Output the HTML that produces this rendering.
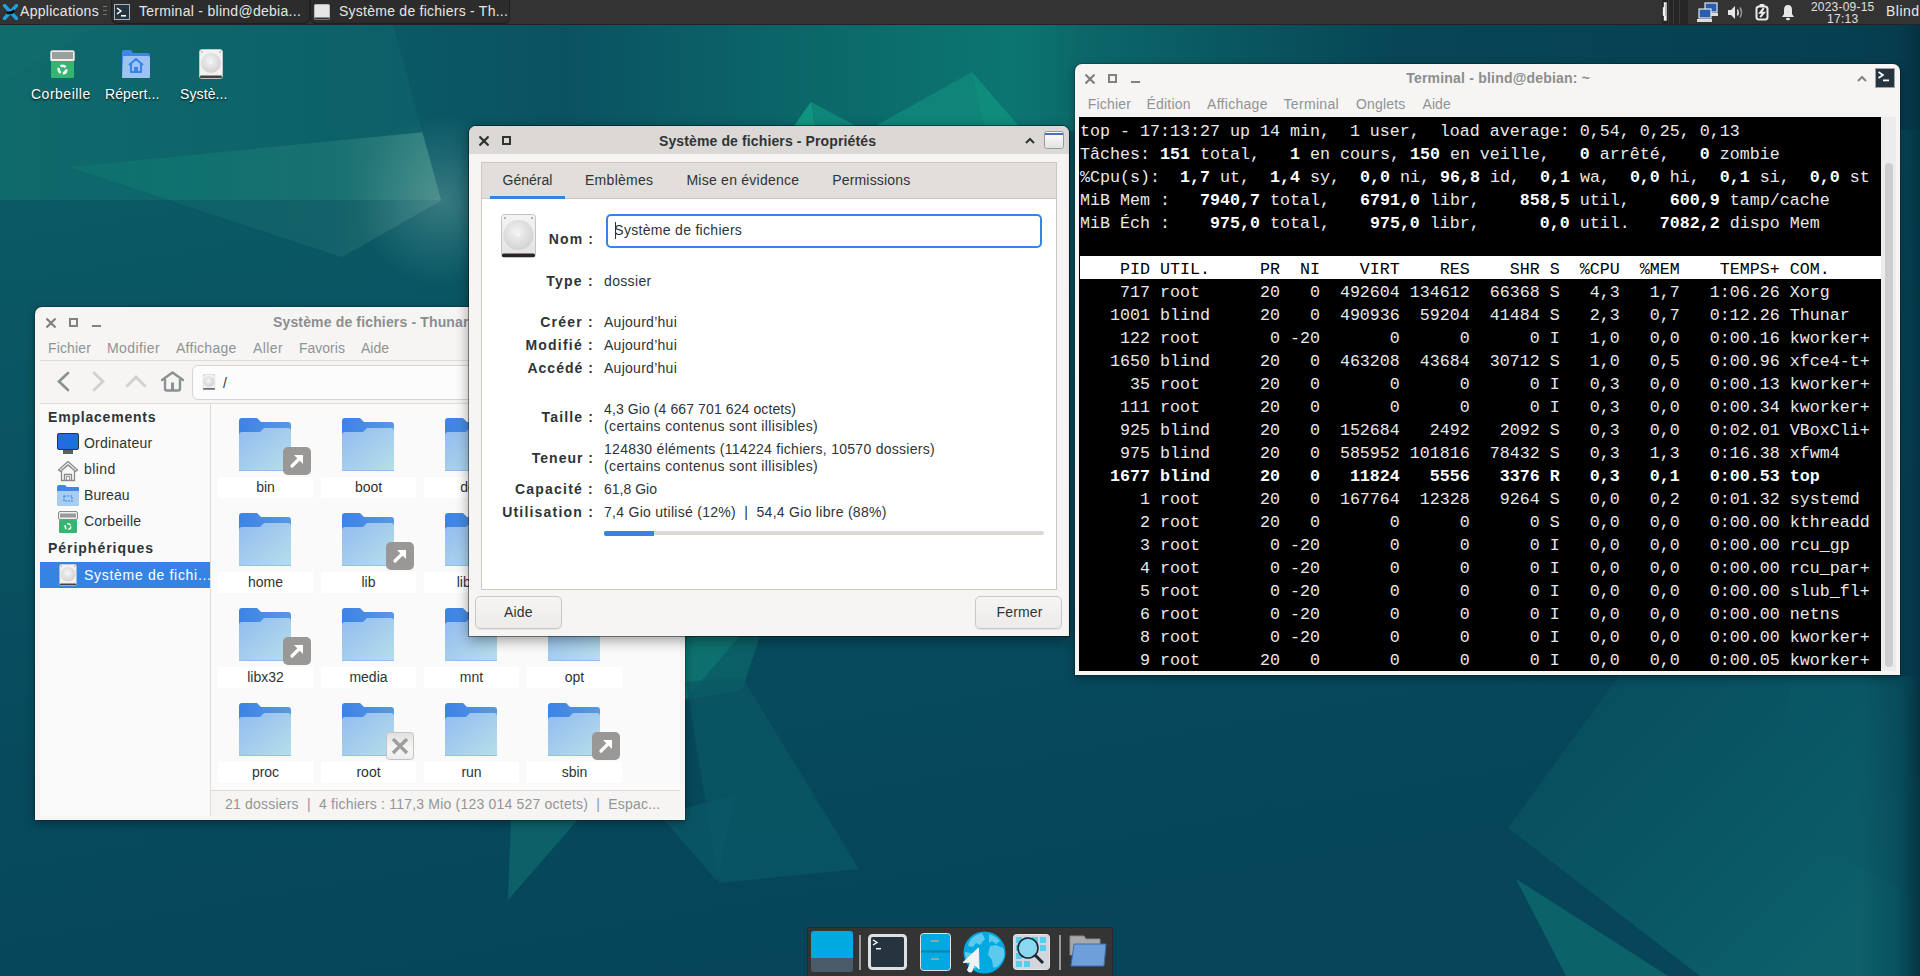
<!DOCTYPE html>
<html><head><meta charset="utf-8">
<style>
*{margin:0;padding:0;box-sizing:border-box}
html,body{width:1920px;height:976px;overflow:hidden}
body{position:relative;font-family:"Liberation Sans",sans-serif;font-size:14px;color:#2e3436;background:#0b4a5c}
.a{position:absolute}
.t{position:absolute;white-space:nowrap;line-height:1}
#wall{position:absolute;left:0;top:0;width:1920px;height:976px}
#panel{position:absolute;left:0;top:0;width:1920px;height:25px;background:#333333;border-bottom:1px solid #232323}
.pt{color:#e6e6e6;font-size:14px}
.task{position:absolute;top:0;height:24px;background:#2c2c2c;border:1px solid #1f1f1f;border-top:none;border-radius:0 0 6px 6px}
.dico{color:#fff;font-size:14px;text-shadow:0 1px 2px #000}

.win{position:absolute;background:#f6f5f4;border-radius:7px 7px 0 0;box-shadow:0 0 0 1px rgba(0,0,0,0.18),0 3px 10px rgba(0,0,0,0.35)}
.ui{font-size:14px;color:#2e3436}
.mi{font-size:14px;color:#8f9394}
.fl{position:absolute;width:95px;height:21px;background:#fff}
.fn{position:absolute;width:95px;text-align:center;font-size:14px;color:#2e3436;line-height:1}

.lb{position:absolute;right:475px;white-space:nowrap;line-height:1;font-size:14px;font-weight:bold;color:#2e3436}
.vl{position:absolute;left:135px;white-space:nowrap;line-height:1;font-size:14px;color:#2e3436}
.btn{position:absolute;width:87px;height:33px;border:1px solid #cdc7c2;border-radius:5px;background:linear-gradient(#f6f5f4,#edebe9);box-shadow:0 1px 1px rgba(0,0,0,0.07)}

.tr{position:absolute;left:1px;height:23px;width:801px;font-family:"Liberation Mono",monospace;font-size:16.667px;line-height:23px;color:#e8e8e8;white-space:pre;padding-top:2px}
.tr b{color:#fff}
</style></head><body>
<svg id="wall" width="1920" height="976" viewBox="0 0 1920 976">
<defs>
<linearGradient id="bg" x1="0" y1="0" x2="0.35" y2="1">
<stop offset="0" stop-color="#0c5f67"/>
<stop offset="0.35" stop-color="#0a5563"/>
<stop offset="0.7" stop-color="#074a5e"/>
<stop offset="1" stop-color="#06455a"/>
</linearGradient>
<linearGradient id="topmid" gradientUnits="userSpaceOnUse" x1="393" y1="0" x2="1075" y2="0">
<stop offset="0" stop-color="#0b5966"/>
<stop offset="0.25" stop-color="#0a5262"/>
<stop offset="0.6" stop-color="#0b6769"/>
<stop offset="0.9" stop-color="#0c7571"/>
<stop offset="1" stop-color="#0c6f6f"/>
</linearGradient>
<linearGradient id="topright" gradientUnits="userSpaceOnUse" x1="1040" y1="0" x2="1920" y2="0">
<stop offset="0" stop-color="#0c706f"/>
<stop offset="0.05" stop-color="#0b6769"/>
<stop offset="0.4" stop-color="#074656"/>
<stop offset="1" stop-color="#063e50"/>
</linearGradient>
<linearGradient id="rstrip" x1="0" y1="0" x2="1" y2="0">
<stop offset="0" stop-color="#05384a" stop-opacity="0"/>
<stop offset="0.6" stop-color="#05384a" stop-opacity="0.35"/>
<stop offset="1" stop-color="#042f40" stop-opacity="0.9"/>
</linearGradient>
<linearGradient id="leftg" x1="0" y1="0" x2="0" y2="1">
<stop offset="0" stop-color="#0b5d66"/>
<stop offset="0.5" stop-color="#09525f"/>
<stop offset="1" stop-color="#07485c"/>
</linearGradient>
<radialGradient id="glow" cx="0.5" cy="0.5" r="0.5"><stop offset="0" stop-color="#6a9c9c" stop-opacity="0.5"/><stop offset="1" stop-color="#4a9a96" stop-opacity="0"/></radialGradient>
</defs>
<rect width="1920" height="976" fill="url(#bg)"/>
<linearGradient id="tl" gradientUnits="userSpaceOnUse" x1="0" y1="0" x2="441" y2="0"><stop offset="0" stop-color="#0f6a6c"/><stop offset="1" stop-color="#0c5f68"/></linearGradient>
<linearGradient id="wedge" gradientUnits="userSpaceOnUse" x1="70" y1="0" x2="441" y2="0"><stop offset="0" stop-color="#0f7a72" stop-opacity="0.5"/><stop offset="0.3" stop-color="#0f7771" stop-opacity="0.7"/><stop offset="0.7" stop-color="#217a76" stop-opacity="0.6"/><stop offset="1" stop-color="#3d8984" stop-opacity="0.9"/></linearGradient>
<polygon points="0,25 393,25 441,200 0,200" fill="url(#tl)"/>
<polygon points="70,167 425,132 442,200 342,257" fill="url(#wedge)"/>
<polygon points="171,200 442,200 342,257" fill="#094a5c" opacity="0.3"/>
<polygon points="0,25 99,25 0,83" fill="#117070" opacity="0.35"/>
<polygon points="393,25 1075,25 1075,130 441,200" fill="url(#topmid)"/>
<circle cx="441" cy="200" r="85" fill="url(#glow)"/>
<polygon points="791,130 811,102 864,130" fill="#0e8779"/>
<polygon points="791,130 811,102 815,130" fill="#12a086" opacity="0.6"/>
<polygon points="868,130 972,72 1022,130" fill="#0e8578"/>
<polygon points="972,72 985,130 1022,130" fill="#0f8f7e" opacity="0.7"/>
<rect x="1040" y="25" width="880" height="105" fill="url(#topright)"/>
<polygon points="685,636 760,636 742,690 685,700" fill="#0b6568" opacity="0.8"/>
<polygon points="685,636 740,636 685,700" fill="#0e726f" opacity="0.9"/>
<polygon points="686,682 742,677 859,869 719,883" fill="#0a5866" opacity="0.7"/>
<polygon points="511,815 582,815 508,900" fill="#0c6068"/>
<polygon points="660,815 735,795 717,881" fill="#0a5767" opacity="0.8"/>
<linearGradient id="brA" gradientUnits="userSpaceOnUse" x1="1500" y1="676" x2="1800" y2="976"><stop offset="0" stop-color="#074b5d"/><stop offset="0.5" stop-color="#095463"/><stop offset="1" stop-color="#0b606a"/></linearGradient>
<polygon points="1508,828 1619,676 1920,676 1920,976 1700,976" fill="url(#brA)"/>
<polygon points="1516,879 1566,976 1668,976" fill="#0b6369"/>
<polygon points="1792,676 1920,676 1920,900 1766,815" fill="#0a5868" opacity="0.45"/>
<rect x="1860" y="25" width="60" height="951" fill="url(#rstrip)"/>
</svg>

<!-- top panel -->
<div id="panel">
<svg class="a" style="left:3px;top:4px" width="15" height="16" viewBox="0 0 15 16"><path d="M1.5 1.5 L13.5 14.5 M13.5 1.5 L1.5 14.5" stroke="#1aa3de" stroke-width="3.4" stroke-linecap="square"/><path d="M3.2 8.6 Q4.2 7.2 6.5 7.4 L9.5 6.6 L10.5 5.2 L11.2 6.4 L12.3 7.2 L11 8.2 Q10.4 10 7.5 10.2 L4.5 10.3 Z" fill="#0a0a0a"/></svg>
<div class="t pt" style="left:20px;top:4px;letter-spacing:0.29px">Applications</div>
<div class="a" style="left:103px;top:6px;width:4px;height:1px;background:#777;box-shadow:0 4px 0 #777,0 8px 0 #777"></div>
<div class="task" style="left:111px;width:199px">
<svg class="a" style="left:2px;top:4px" width="16" height="16" viewBox="0 0 16 16"><rect x="0.5" y="0.5" width="15" height="15" fill="#263440" stroke="#a9b4bd"/><path d="M3 4 L7 7 L3 10" stroke="#fff" stroke-width="1.5" fill="none"/><rect x="7" y="11" width="5" height="1.6" fill="#fff"/></svg>
<div class="t pt" style="left:27px;top:4px;letter-spacing:0.28px">Terminal - blind@debia...</div>
</div>
<div class="task" style="left:310px;width:200px">
<svg class="a" style="left:3px;top:4px" width="16" height="16" viewBox="0 0 16 16"><rect x="0.5" y="0.5" width="15" height="15" rx="1" fill="#e6e6e6" stroke="#bbb"/><rect x="0.5" y="13.5" width="15" height="2" fill="#333"/></svg>
<div class="t pt" style="left:28px;top:4px;letter-spacing:0.25px">Système de fichiers - Th...</div>
</div>
<div class="a" style="left:1662px;top:0;width:26px;height:24px;background:#262626"></div><div class="a" style="left:1668px;top:0;width:1px;height:24px;background:#3a3a3a"></div><div class="a" style="left:1673px;top:0;width:1px;height:24px;background:#3a3a3a"></div><div class="a" style="left:1679px;top:0;width:1px;height:24px;background:#3a3a3a"></div><svg class="a" style="left:1661px;top:1px" width="8" height="21" viewBox="0 0 8 21"><path d="M2.5 1 H6 V20 H2.5 V15 H1.5 V6 H2.5 Z" fill="#f2f2f2" stroke="#222" stroke-width="0.6"/><rect x="4" y="3" width="1" height="12" fill="#bbb"/></svg>

<svg class="a" style="left:1697px;top:2px" width="24" height="21" viewBox="0 0 24 21"><rect x="8" y="1" width="12" height="9" fill="#2a5db0" stroke="#dfe6ec" stroke-width="1.2"/><rect x="11" y="11" width="10" height="3" fill="#ddd"/><rect x="2" y="7" width="12" height="9" fill="#2a5db0" stroke="#dfe6ec" stroke-width="1.2"/><rect x="0" y="17" width="15" height="3" fill="#ddd"/></svg>
<svg class="a" style="left:1727px;top:5px" width="18" height="15" viewBox="0 0 18 15"><path d="M1 5 H4 L8 1 V14 L4 10 H1 Z" fill="#e6e6e6"/><path d="M10.5 4.5 Q12 7.5 10.5 10.5" stroke="#e6e6e6" stroke-width="1.5" fill="none"/><path d="M13 2.5 Q16 7.5 13 12.5" stroke="#999" stroke-width="1.5" fill="none"/></svg>
<svg class="a" style="left:1755px;top:3px" width="14" height="18" viewBox="0 0 14 18"><rect x="1.5" y="3.5" width="11" height="13" rx="2.5" fill="#2a2a2a" stroke="#ececec" stroke-width="2"/><rect x="4.5" y="1" width="5" height="3" rx="1" fill="#ececec"/><path d="M8.8 5.2 L5.2 9.8 H8.8 L5.2 14.2" stroke="#ececec" stroke-width="2.1" fill="none" stroke-linejoin="miter"/></svg>
<svg class="a" style="left:1781px;top:4px" width="14" height="17" viewBox="0 0 14 17"><path d="M7 1 Q11 1 11 6 V10 L13 13 H1 L3 10 V6 Q3 1 7 1 Z" fill="#e6e6e6"/><ellipse cx="7" cy="15" rx="2" ry="1.2" fill="#e6e6e6"/></svg>
<div class="t" style="left:1811px;top:1px;font-size:12px;color:#e0e0e0;letter-spacing:0.2px">2023-09-15</div>
<div class="t" style="left:1827px;top:13px;font-size:12px;color:#e0e0e0;letter-spacing:0.3px">17:13</div>
<div class="t pt" style="left:1886px;top:4px;letter-spacing:0.5px">Blind</div>
</div>

<!-- desktop icons -->
<svg class="a" style="left:50px;top:50px" width="25" height="28" viewBox="0 0 25 28"><rect x="0.5" y="0.5" width="24" height="11" rx="2" fill="#f0f0f0" stroke="#bdbdbd"/><rect x="2" y="2" width="21" height="7" fill="#9e9e9e"/><rect x="1" y="11" width="23" height="17" rx="1.5" fill="#35b56f"/><circle cx="12.5" cy="19.5" r="3.8" fill="none" stroke="#fff" stroke-width="2.6" stroke-dasharray="5.5 2.2"/></svg>
<svg class="a" style="left:122px;top:50px" width="28" height="28" viewBox="0 0 28 28"><path d="M0 2 Q0 0 2 0 H9 L11 3 H26 Q28 3 28 5 V26 H0 Z" fill="#3f86e8"/><path d="M1 7 Q1 6 2 6 H26 Q28 6 28 8 V27 Q28 28 27 28 H0 Z" fill="#9cc3f3"/><path d="M7 15 L14 9 L21 15 M9 13.5 V22 H19 V13.5 M13 22 V18 H15 V22" stroke="#3a84e6" stroke-width="2" fill="none"/></svg>
<svg class="a" style="left:199px;top:49px" width="24" height="30" viewBox="0 0 24 30"><use href="#drive"/></svg>
<div class="t dico" style="left:31px;top:87px;letter-spacing:0.5px">Corbeille</div>
<div class="t dico" style="left:105px;top:87px;letter-spacing:0.09px">Répert...</div>
<div class="t dico" style="left:180px;top:87px;letter-spacing:0.1px">Systè...</div>

<!-- dock -->
<div class="a" style="left:807px;top:927px;width:306px;height:49px;background:#343434;border:1px solid #2a2a2a;border-bottom:none"></div>
<svg class="a" style="left:811px;top:931px" width="42" height="41" viewBox="0 0 42 41"><rect x="0" y="0" width="42" height="41" rx="3" fill="#4a5c6a"/><path d="M3 0 H39 Q42 0 42 3 V27 H0 V3 Q0 0 3 0 Z" fill="#00a9df"/></svg>
<div class="a" style="left:859px;top:935px;width:2px;height:35px;background:#9a9a9a"></div>
<svg class="a" style="left:868px;top:934px" width="39" height="36" viewBox="0 0 39 36"><rect x="1.5" y="1.5" width="36" height="33" rx="3" fill="#263440" stroke="#dde1e4" stroke-width="3"/><path d="M5 6 L9 8.5 L5 11" stroke="#fff" stroke-width="1.4" fill="none"/><rect x="8" y="14" width="5" height="1.4" fill="#fff"/></svg>
<svg class="a" style="left:920px;top:933px" width="31" height="38" viewBox="0 0 31 38"><rect x="0.5" y="0.5" width="30" height="37" rx="3" fill="#00a9df" stroke="#dfe3e6"/><rect x="1" y="17.5" width="29" height="2" fill="#0a82aa"/><rect x="11" y="7" width="8" height="2" fill="#8aa"/><rect x="11" y="25" width="8" height="2" fill="#8aa"/></svg>
<svg class="a" style="left:963px;top:931px" width="43" height="43" viewBox="0 0 43 43"><circle cx="21.5" cy="21.5" r="21" fill="#00a9df"/><path d="M9 7 Q14 3 19 2 L22 8 L17 14 L13 12 L10 16 L5 15 Q6 10 9 7 Z" fill="#5ccaed"/><path d="M26 3 Q33 5 37 10 L33 13 L29 10 L26 12 Z" fill="#5ccaed"/><path d="M27 15 L33 14 L40 17 Q42 21 41 27 L37 33 Q33 38 30 36 L29 29 L25 24 L26 19 Z" fill="#5ccaed"/><path d="M2 21 L8 22 L14 26 L16 33 L12 38 Q4 32 2 24 Z" fill="#5ccaed"/><path d="M15.5 17 L0 31.5 L8 31 L4.5 39 Q5 41.5 8.5 41 L11.5 33.5 L16 38 Z" fill="#f2f2f2" stroke="#f2f2f2" stroke-width="1" stroke-linejoin="round"/></svg>
<svg class="a" style="left:1013px;top:934px" width="37" height="36" viewBox="0 0 37 36"><rect x="0.5" y="0.5" width="36" height="35" rx="3" fill="#d4d7da" stroke="#e4e6e8"/><g fill="#5ccaed"><rect x="3" y="3" width="6" height="6"/><rect x="11" y="3" width="6" height="6"/><rect x="19" y="3" width="6" height="6"/><rect x="27" y="3" width="6" height="6"/><rect x="3" y="11" width="6" height="6"/><rect x="27" y="11" width="6" height="6"/><rect x="3" y="19" width="6" height="6"/><rect x="3" y="27" width="6" height="6"/><rect x="11" y="27" width="6" height="6"/></g><circle cx="15" cy="14" r="10" fill="#8ad7f2" stroke="#1d2a33" stroke-width="1.6"/><path d="M22 21 L30 29" stroke="#1d2a33" stroke-width="3"/></svg>
<div class="a" style="left:1059px;top:935px;width:2px;height:35px;background:#9a9a9a"></div>
<svg class="a" style="left:1069px;top:935px" width="38" height="33" viewBox="0 0 38 33"><path d="M1 1 H15 L17 4 H31 V20 H1 Z" fill="#a9a9a9" stroke="#888"/><path d="M5 9 H37 L35 31 H2 Z" fill="#6e9fd9" stroke="#3b6fb0"/></svg>


<svg width="0" height="0" style="position:absolute">
<defs>
<linearGradient id="fback" x1="0" y1="0" x2="1" y2="0"><stop offset="0" stop-color="#3b83e5"/><stop offset="1" stop-color="#5b97e2"/></linearGradient>
<linearGradient id="ffront" x1="0" y1="0" x2="1" y2="1"><stop offset="0" stop-color="#93bbf1"/><stop offset="1" stop-color="#b6dfe9"/></linearGradient>
<symbol id="folder" viewBox="0 0 52 53"><path d="M0 3 Q0 0 3 0 H18 L22 4 H49 Q52 4 52 7 V53 H0 Z" fill="url(#fback)"/><path d="M0 17 Q0 14 3 14 H21 L25 10 H49 Q52 10 52 13 V52.5 H0 Z" fill="url(#ffront)"/><rect x="0" y="52" width="52" height="1" fill="#8fc0ee"/></symbol>
<symbol id="symlink" viewBox="0 0 28 28"><rect x="0" y="0" width="28" height="28" rx="5" fill="#9a9896"/><path d="M9 19 L18.5 9.5" stroke="#fff" stroke-width="3.2" stroke-linecap="round"/><path d="M11 8 H20 V17 Z" fill="#fff"/></symbol>
<symbol id="unread" viewBox="0 0 28 28"><defs><linearGradient id="ug" x1="0" y1="0" x2="0" y2="1"><stop offset="0" stop-color="#e0e0e0"/><stop offset="0.6" stop-color="#f7f7f7"/><stop offset="1" stop-color="#ececec"/></linearGradient></defs><rect x="0.5" y="0.5" width="27" height="27" rx="3" fill="url(#ug)" stroke="#c3c3c3"/><path d="M7 7 L21 21 M21 7 L7 21" stroke="#9c9f9a" stroke-width="3.4"/></symbol>
<radialGradient id="disc" cx="0.45" cy="0.4" r="0.6"><stop offset="0" stop-color="#f4f4f4"/><stop offset="1" stop-color="#d2d2d2"/></radialGradient><symbol id="drive" viewBox="0 0 24 30"><rect x="0.5" y="0.5" width="23" height="29" rx="2.5" fill="#f2f2f2" stroke="#c4c4c4"/><circle cx="12" cy="14" r="10" fill="url(#disc)"/><circle cx="12" cy="14" r="0.9" fill="#fff"/><rect x="1" y="26.5" width="22" height="2.5" rx="1" fill="#4a4040"/><circle cx="3" cy="3" r="0.8" fill="#999"/><circle cx="21" cy="3" r="0.8" fill="#999"/></symbol>
</defs></svg>

<!-- thunar -->
<div class="win" style="left:35px;top:307px;width:650px;height:513px">
<svg class="a" style="left:10.5px;top:10.5px" width="10" height="10" viewBox="0 0 10 10"><path d="M1.2 1.2 L8.8 8.8 M8.8 1.2 L1.2 8.8" stroke="#7f8384" stroke-width="2.3" stroke-linecap="round"/></svg>
<div class="a" style="left:34px;top:11px;width:9px;height:9px;border:2px solid #7f8384"></div>
<div class="a" style="left:57px;top:18px;width:9px;height:2px;background:#7f8384"></div>
<div class="t" style="left:238px;top:8px;font-size:14px;font-weight:bold;color:#8b8e8f;letter-spacing:0.15px">Système de fichiers - Thunar</div>
<div class="t mi" style="left:13px;top:34px;letter-spacing:0.14px">Fichier</div>
<div class="t mi" style="left:72px;top:34px;letter-spacing:0.4px">Modifier</div>
<div class="t mi" style="left:141px;top:34px;letter-spacing:0.28px">Affichage</div>
<div class="t mi" style="left:218px;top:34px;letter-spacing:0.4px">Aller</div>
<div class="t mi" style="left:264px;top:34px">Favoris</div>
<div class="t mi" style="left:326px;top:34px">Aide</div>
<div class="a" style="left:5px;top:53px;width:640px;height:1px;background:#dedbd8"></div>
<svg class="a" style="left:21px;top:64px" width="14" height="21" viewBox="0 0 14 21"><path d="M12 2 L3 10.5 L12 19" stroke="#8b9193" stroke-width="2.7" fill="none" stroke-linecap="round"/></svg>
<svg class="a" style="left:57px;top:64px" width="14" height="21" viewBox="0 0 14 21"><path d="M2 2 L11 10.5 L2 19" stroke="#d3cfcb" stroke-width="2.7" fill="none" stroke-linecap="round"/></svg>
<svg class="a" style="left:90px;top:68px" width="22" height="13" viewBox="0 0 22 13"><path d="M2 11 L11 2 L20 11" stroke="#d3cfcb" stroke-width="2.7" fill="none" stroke-linecap="round"/></svg>
<svg class="a" style="left:125px;top:64px" width="25" height="21" viewBox="0 0 25 21"><path d="M2 9 L12.5 1.5 L23 9" stroke="#8b9193" stroke-width="2.4" fill="none" stroke-linecap="round" stroke-linejoin="round"/><path d="M5 8 V17.5 Q5 19.5 7 19.5 H18 Q20 19.5 20 17.5 V8" stroke="#8b9193" stroke-width="2.4" fill="none"/><rect x="11" y="11.5" width="3" height="8" fill="#8b9193"/></svg>
<div class="a" style="left:157px;top:58px;width:500px;height:35px;background:#fcfcfc;border:1px solid #d8d4d0;border-radius:6px"></div>
<svg class="a" style="left:167px;top:67px" width="14" height="16" viewBox="0 0 24 30"><use href="#drive"/></svg>
<div class="t" style="left:188px;top:69px;font-size:14px;color:#2e3436">/</div>
<div class="a" style="left:5px;top:96px;width:640px;height:1px;background:#dedbd8"></div>
<div class="a" style="left:5px;top:97px;width:170px;height:412px;background:#fafafa"></div>
<div class="a" style="left:175px;top:97px;width:1px;height:412px;background:#dedbd8"></div>
<div class="a" style="left:176px;top:97px;width:469px;height:386px;background:#fafafa"></div>
<div class="a" style="left:176px;top:483px;width:469px;height:1px;background:#dedbd8"></div>
<div class="t" style="left:13px;top:103px;font-size:14px;font-weight:bold;color:#2e3436;letter-spacing:0.8px">Emplacements</div>
<svg class="a" style="left:22px;top:126px" width="22" height="22" viewBox="0 0 22 22"><rect x="0.5" y="0.5" width="21" height="16" rx="1.5" fill="#1c6fdc" stroke="#2e3436"/><rect x="6" y="17" width="10" height="4" fill="#5a5f63"/></svg>
<div class="t ui" style="left:49px;top:129px;letter-spacing:0.22px">Ordinateur</div>
<svg class="a" style="left:22px;top:153px" width="22" height="22" viewBox="0 0 22 22"><path d="M11 1.5 L20.5 10 L18.5 11.5 L11 5 L3.5 11.5 L1.5 10 Z" fill="#f2f2f2" stroke="#8a8a8a" stroke-width="1.2" stroke-linejoin="round"/><path d="M4.5 10.5 V20.5 H17.5 V10.5 L11 5 Z" fill="#f7f7f7" stroke="#8a8a8a" stroke-width="1.3"/><path d="M7.5 20.5 V14.5 H14.5 V20.5" fill="none" stroke="#8a8a8a" stroke-width="1.3"/><path d="M9.5 20.5 V16.5 H12.5 V20.5" fill="none" stroke="#9a9a9a" stroke-width="1"/></svg>
<div class="t ui" style="left:49px;top:155px;letter-spacing:0.4px">blind</div>
<svg class="a" style="left:22px;top:178px" width="22" height="21" viewBox="0 0 22 21"><path d="M0 2 Q0 0 2 0 H8 L10 2 H21 Q22 2 22 3 V21 H0 Z" fill="#3f86e8"/><path d="M0 6 H22 V21 H0 Z" fill="#a7cdf3"/><rect x="7" y="11" width="8" height="5" fill="none" stroke="#3f86e8" stroke-width="1.2" stroke-dasharray="2 1"/></svg>
<div class="t ui" style="left:49px;top:181px;letter-spacing:0.08px">Bureau</div>
<svg class="a" style="left:23px;top:204px" width="20" height="22" viewBox="0 0 20 22"><rect x="0.5" y="0.5" width="19" height="8" rx="1.5" fill="#f0f0f0" stroke="#8a8a8a"/><rect x="2" y="2.5" width="16" height="4" fill="#9a9a9a"/><rect x="1" y="9" width="18" height="13" rx="1" fill="#35b56f"/><circle cx="10" cy="15.5" r="2.8" fill="none" stroke="#fff" stroke-width="1.6" stroke-dasharray="4 2"/></svg>
<div class="t ui" style="left:49px;top:207px;letter-spacing:0.22px">Corbeille</div>
<div class="t" style="left:13px;top:234px;font-size:14px;font-weight:bold;color:#2e3436;letter-spacing:0.97px">Périphériques</div>
<div class="a" style="left:5px;top:255px;width:170px;height:26px;background:#3584e4"></div>
<svg class="a" style="left:24px;top:257px" width="18" height="22" viewBox="0 0 24 30"><use href="#drive"/></svg>
<div class="t" style="left:49px;top:261px;font-size:14px;color:#fff;letter-spacing:0.7px">Système de fichi...</div>
<div class="t" style="left:190px;top:490px;font-size:14px;color:#929595;letter-spacing:0.2px">21 dossiers&nbsp; |&nbsp; 4 fichiers : 117,3 Mio (123 014 527 octets)&nbsp; |&nbsp; Espac...</div>
<svg class="a" style="left:204px;top:111px" width="52" height="53"><use href="#folder"/></svg>
<svg class="a" style="left:248px;top:140px" width="28" height="28"><use href="#symlink"/></svg>
<div class="fl" style="left:183px;top:170px"></div>
<div class="fn" style="left:183px;top:173px">bin</div>
<svg class="a" style="left:307px;top:111px" width="52" height="53"><use href="#folder"/></svg>
<div class="fl" style="left:286px;top:170px"></div>
<div class="fn" style="left:286px;top:173px">boot</div>
<svg class="a" style="left:410px;top:111px" width="52" height="53"><use href="#folder"/></svg>
<div class="fl" style="left:389px;top:170px"></div>
<div class="fn" style="left:389px;top:173px">dev</div>
<svg class="a" style="left:513px;top:111px" width="52" height="53"><use href="#folder"/></svg>
<div class="fl" style="left:492px;top:170px"></div>
<div class="fn" style="left:492px;top:173px">etc</div>
<svg class="a" style="left:204px;top:206px" width="52" height="53"><use href="#folder"/></svg>
<div class="fl" style="left:183px;top:265px"></div>
<div class="fn" style="left:183px;top:268px">home</div>
<svg class="a" style="left:307px;top:206px" width="52" height="53"><use href="#folder"/></svg>
<svg class="a" style="left:351px;top:235px" width="28" height="28"><use href="#symlink"/></svg>
<div class="fl" style="left:286px;top:265px"></div>
<div class="fn" style="left:286px;top:268px">lib</div>
<svg class="a" style="left:410px;top:206px" width="52" height="53"><use href="#folder"/></svg>
<svg class="a" style="left:454px;top:235px" width="28" height="28"><use href="#symlink"/></svg>
<div class="fl" style="left:389px;top:265px"></div>
<div class="fn" style="left:389px;top:268px">lib32</div>
<svg class="a" style="left:513px;top:206px" width="52" height="53"><use href="#folder"/></svg>
<svg class="a" style="left:557px;top:235px" width="28" height="28"><use href="#symlink"/></svg>
<div class="fl" style="left:492px;top:265px"></div>
<div class="fn" style="left:492px;top:268px">lib64</div>
<svg class="a" style="left:204px;top:301px" width="52" height="53"><use href="#folder"/></svg>
<svg class="a" style="left:248px;top:330px" width="28" height="28"><use href="#symlink"/></svg>
<div class="fl" style="left:183px;top:360px"></div>
<div class="fn" style="left:183px;top:363px">libx32</div>
<svg class="a" style="left:307px;top:301px" width="52" height="53"><use href="#folder"/></svg>
<div class="fl" style="left:286px;top:360px"></div>
<div class="fn" style="left:286px;top:363px">media</div>
<svg class="a" style="left:410px;top:301px" width="52" height="53"><use href="#folder"/></svg>
<div class="fl" style="left:389px;top:360px"></div>
<div class="fn" style="left:389px;top:363px">mnt</div>
<svg class="a" style="left:513px;top:301px" width="52" height="53"><use href="#folder"/></svg>
<div class="fl" style="left:492px;top:360px"></div>
<div class="fn" style="left:492px;top:363px">opt</div>
<svg class="a" style="left:204px;top:396px" width="52" height="53"><use href="#folder"/></svg>
<div class="fl" style="left:183px;top:455px"></div>
<div class="fn" style="left:183px;top:458px">proc</div>
<svg class="a" style="left:307px;top:396px" width="52" height="53"><use href="#folder"/></svg>
<svg class="a" style="left:351px;top:425px" width="28" height="28"><use href="#unread"/></svg>
<div class="fl" style="left:286px;top:455px"></div>
<div class="fn" style="left:286px;top:458px">root</div>
<svg class="a" style="left:410px;top:396px" width="52" height="53"><use href="#folder"/></svg>
<div class="fl" style="left:389px;top:455px"></div>
<div class="fn" style="left:389px;top:458px">run</div>
<svg class="a" style="left:513px;top:396px" width="52" height="53"><use href="#folder"/></svg>
<svg class="a" style="left:557px;top:425px" width="28" height="28"><use href="#symlink"/></svg>
<div class="fl" style="left:492px;top:455px"></div>
<div class="fn" style="left:492px;top:458px">sbin</div>
</div>

<!-- properties dialog -->
<div class="win" style="left:469px;top:126px;width:600px;height:510px;box-shadow:0 0 0 1px rgba(0,0,0,0.42),0 4px 14px rgba(0,0,0,0.4)">
<div class="a" style="left:0;top:0;width:600px;height:28px;background:#dcd8d5;border-radius:7px 7px 0 0"></div>
<svg class="a" style="left:9.5px;top:10px" width="10" height="10" viewBox="0 0 10 10"><path d="M1.2 1.2 L8.8 8.8 M8.8 1.2 L1.2 8.8" stroke="#2e3436" stroke-width="2.3" stroke-linecap="round"/></svg>
<div class="a" style="left:33px;top:10px;width:9px;height:9px;border:2px solid #2e3436"></div>
<div class="t" style="left:190px;top:7.5px;font-size:14px;font-weight:bold;color:#2e3436;letter-spacing:0.12px">Système de fichiers - Propriétés</div>
<svg class="a" style="left:556px;top:11px" width="10" height="7" viewBox="0 0 10 7"><path d="M1 6 L5 2 L9 6" stroke="#2e3436" stroke-width="2" fill="none"/></svg>
<svg class="a" style="left:575px;top:5px" width="20" height="18" viewBox="0 0 20 18"><defs><linearGradient id="wg" x1="0" y1="0" x2="0" y2="1"><stop offset="0" stop-color="#fff"/><stop offset="1" stop-color="#dfe2df"/></linearGradient></defs><rect x="0.5" y="0.5" width="19" height="17" rx="2" fill="url(#wg)" stroke="#9a9a9a"/><rect x="1" y="2" width="18" height="2" fill="#4a6fb5"/></svg>
<div class="a" style="left:12px;top:36px;width:576px;height:428px;background:#fff;border:1px solid #cdc7c2"></div>
<div class="a" style="left:13px;top:37px;width:574px;height:36px;background:#e1dedb;border-bottom:1px solid #cdc7c2"></div>
<div class="a" style="left:21px;top:70px;width:75px;height:3px;background:#3584e4"></div>
<div class="t" style="left:33.5px;top:47px;font-size:14px;color:#2e3436">Général</div>
<div class="t" style="left:116px;top:47px;font-size:14px;color:#2e3436;letter-spacing:0.28px">Emblèmes</div>
<div class="t" style="left:217.4px;top:47px;font-size:14px;color:#2e3436;letter-spacing:0.25px">Mise en évidence</div>
<div class="t" style="left:363.2px;top:47px;font-size:14px;color:#2e3436;letter-spacing:0.18px">Permissions</div>
<svg class="a" style="left:32px;top:88px" width="35" height="44" viewBox="0 0 35 44"><defs><linearGradient id="dg" x1="0" y1="0" x2="0" y2="1"><stop offset="0" stop-color="#f4f4f4"/><stop offset="1" stop-color="#e2e2e2"/></linearGradient></defs><rect x="0.5" y="0.5" width="34" height="43" rx="3" fill="url(#dg)" stroke="#c4c4c4"/><circle cx="17.5" cy="21" r="15" fill="url(#disc)"/><circle cx="17.5" cy="21" r="1.3" fill="#fafafa"/><rect x="1" y="39.5" width="33" height="3.5" rx="1.5" fill="#2b2424"/><circle cx="4" cy="4" r="1" fill="#999"/><circle cx="31" cy="4" r="1" fill="#999"/></svg>
<div class="lb" style="top:106px;letter-spacing:1.10px">Nom :</div>
<div class="a" style="left:137px;top:88px;width:436px;height:34px;background:#fff;border:2px solid #3584e4;border-radius:5px"></div>
<div class="a" style="left:146px;top:96px;width:1px;height:17px;background:#2e3436"></div>
<div class="t" style="left:145.3px;top:97px;font-size:14px;color:#2e3436;letter-spacing:0.3px">Système de fichiers</div>
<div class="lb" style="top:148px;letter-spacing:1.27px">Type :</div>
<div class="vl" style="top:148px;letter-spacing:0.34px">dossier</div>
<div class="lb" style="top:188.7px;letter-spacing:1.24px">Créer :</div>
<div class="vl" style="top:188.7px;letter-spacing:0.27px">Aujourd’hui</div>
<div class="lb" style="top:211.5px;letter-spacing:1.23px">Modifié :</div>
<div class="vl" style="top:211.5px;letter-spacing:0.27px">Aujourd’hui</div>
<div class="lb" style="top:234.6px;letter-spacing:1.03px">Accédé :</div>
<div class="vl" style="top:234.6px;letter-spacing:0.27px">Aujourd’hui</div>
<div class="lb" style="top:284px;letter-spacing:1.14px">Taille :</div>
<div class="vl" style="top:276px;letter-spacing:0.1px">4,3 Gio (4 667 701 624 octets)</div>
<div class="vl" style="top:292.8px;letter-spacing:0.36px">(certains contenus sont illisibles)</div>
<div class="lb" style="top:324.5px;letter-spacing:1.00px">Teneur :</div>
<div class="vl" style="top:315.6px;letter-spacing:0.28px">124830 éléments (114224 fichiers, 10570 dossiers)</div>
<div class="vl" style="top:332.5px;letter-spacing:0.36px">(certains contenus sont illisibles)</div>
<div class="lb" style="top:356px;letter-spacing:1.21px">Capacité :</div>
<div class="vl" style="top:356px">61,8 Gio</div>
<div class="lb" style="top:379px;letter-spacing:1.20px">Utilisation :</div>
<div class="vl" style="top:379px;letter-spacing:0.28px">7,4 Gio utilisé (12%)&nbsp; |&nbsp; 54,4 Gio libre (88%)</div>
<div class="a" style="left:135px;top:405px;width:440px;height:4px;background:#dcd8d4;border-radius:2px"></div>
<div class="a" style="left:135px;top:404.5px;width:50px;height:5px;background:#3584e4;border-radius:2px 0 0 2px"></div>
<div class="btn" style="left:6px;top:470px"></div>
<div class="t" style="left:35px;top:479.2px;font-size:14px;color:#2e3436;letter-spacing:0.17px">Aide</div>
<div class="btn" style="left:506px;top:470px"></div>
<div class="t" style="left:527.5px;top:479px;font-size:14px;color:#2e3436;letter-spacing:0.15px">Fermer</div>
</div>

<!-- terminal -->
<div class="win" style="left:1075px;top:64px;width:825px;height:611px">
<svg class="a" style="left:9.5px;top:9.5px" width="10" height="10" viewBox="0 0 10 10"><path d="M1.2 1.2 L8.8 8.8 M8.8 1.2 L1.2 8.8" stroke="#7f8384" stroke-width="2.3" stroke-linecap="round"/></svg>
<div class="a" style="left:33px;top:10px;width:9px;height:9px;border:2px solid #7f8384"></div>
<div class="a" style="left:56px;top:17px;width:9px;height:2px;background:#7f8384"></div>
<div class="t" style="left:331.25px;top:7.2px;font-size:14px;font-weight:bold;color:#8b8e8f;letter-spacing:0.2px">Terminal - blind@debian: ~</div>
<svg class="a" style="left:782px;top:11px" width="10" height="7" viewBox="0 0 10 7"><path d="M1 6 L5 2 L9 6" stroke="#7f8384" stroke-width="2" fill="none"/></svg>
<svg class="a" style="left:800px;top:4px" width="20" height="20" viewBox="0 0 20 20"><rect x="0.5" y="0.5" width="19" height="19" fill="#263440" stroke="#9aa5ad"/><path d="M3.5 4 L8 7 L3.5 10" stroke="#fff" stroke-width="1.6" fill="none"/><rect x="8" y="11.5" width="6" height="1.8" fill="#fff"/></svg>
<div class="t mi" style="left:12.7px;top:32.8px;letter-spacing:0.21px">Fichier</div>
<div class="t mi" style="left:71.5px;top:32.8px;letter-spacing:0.2px">Édition</div>
<div class="t mi" style="left:132px;top:32.8px;letter-spacing:0.29px">Affichage</div>
<div class="t mi" style="left:208.5px;top:32.8px;letter-spacing:0.32px">Terminal</div>
<div class="t mi" style="left:281px;top:32.8px;letter-spacing:0.18px">Onglets</div>
<div class="t mi" style="left:347.5px;top:32.8px;letter-spacing:0.07px">Aide</div>
<div class="a" style="left:4px;top:53px;width:802px;height:554px;background:#000;overflow:hidden">
<div class="tr" style="top:1px">top - 17:13:27 up 14 min,  1 user,  load average: 0,54, 0,25, 0,13</div>
<div class="tr" style="top:24px">Tâches: <b>151</b> total,   <b>1</b> en cours, <b>150</b> en veille,   <b>0</b> arrêté,   <b>0</b> zombie</div>
<div class="tr" style="top:47px">%Cpu(s):  <b>1,7</b> ut,  <b>1,4</b> sy,  <b>0,0</b> ni, <b>96,8</b> id,  <b>0,1</b> wa,  <b>0,0</b> hi,  <b>0,1</b> si,  <b>0,0</b> st</div>
<div class="tr" style="top:70px">MiB Mem :   <b>7940,7</b> total,   <b>6791,0</b> libr,    <b>858,5</b> util,    <b>600,9</b> tamp/cache</div>
<div class="tr" style="top:93px">MiB Éch :    <b>975,0</b> total,    <b>975,0</b> libr,      <b>0,0</b> util.   <b>7082,2</b> dispo Mem</div>
<div class="tr" style="top:116px"></div>
<div class="tr" style="top:139px;background:#fff;color:#000">    PID UTIL.     PR  NI    VIRT    RES    SHR S  %CPU  %MEM    TEMPS+ COM.</div>
<div class="tr" style="top:162px">    717 root      20   0  492604 134612  66368 S   4,3   1,7   1:06.26 Xorg</div>
<div class="tr" style="top:185px">   1001 blind     20   0  490936  59204  41484 S   2,3   0,7   0:12.26 Thunar</div>
<div class="tr" style="top:208px">    122 root       0 -20       0      0      0 I   1,0   0,0   0:00.16 kworker+</div>
<div class="tr" style="top:231px">   1650 blind     20   0  463208  43684  30712 S   1,0   0,5   0:00.96 xfce4-t+</div>
<div class="tr" style="top:254px">     35 root      20   0       0      0      0 I   0,3   0,0   0:00.13 kworker+</div>
<div class="tr" style="top:277px">    111 root      20   0       0      0      0 I   0,3   0,0   0:00.34 kworker+</div>
<div class="tr" style="top:300px">    925 blind     20   0  152684   2492   2092 S   0,3   0,0   0:02.01 VBoxCli+</div>
<div class="tr" style="top:323px">    975 blind     20   0  585952 101816  78432 S   0,3   1,3   0:16.38 xfwm4</div>
<div class="tr" style="top:346px"><b>   1677 blind     20   0   11824   5556   3376 R   0,3   0,1   0:00.53 top</b></div>
<div class="tr" style="top:369px">      1 root      20   0  167764  12328   9264 S   0,0   0,2   0:01.32 systemd</div>
<div class="tr" style="top:392px">      2 root      20   0       0      0      0 S   0,0   0,0   0:00.00 kthreadd</div>
<div class="tr" style="top:415px">      3 root       0 -20       0      0      0 I   0,0   0,0   0:00.00 rcu_gp</div>
<div class="tr" style="top:438px">      4 root       0 -20       0      0      0 I   0,0   0,0   0:00.00 rcu_par+</div>
<div class="tr" style="top:461px">      5 root       0 -20       0      0      0 I   0,0   0,0   0:00.00 slub_fl+</div>
<div class="tr" style="top:484px">      6 root       0 -20       0      0      0 I   0,0   0,0   0:00.00 netns</div>
<div class="tr" style="top:507px">      8 root       0 -20       0      0      0 I   0,0   0,0   0:00.00 kworker+</div>
<div class="tr" style="top:530px">      9 root      20   0       0      0      0 I   0,0   0,0   0:00.05 kworker+</div>
</div>
<div class="a" style="left:806px;top:53px;width:15px;height:554px;background:#ececec"></div>
<div class="a" style="left:810px;top:99px;width:8px;height:504px;background:#cdcdcd;border-radius:4px"></div>
</div>
</body></html>
